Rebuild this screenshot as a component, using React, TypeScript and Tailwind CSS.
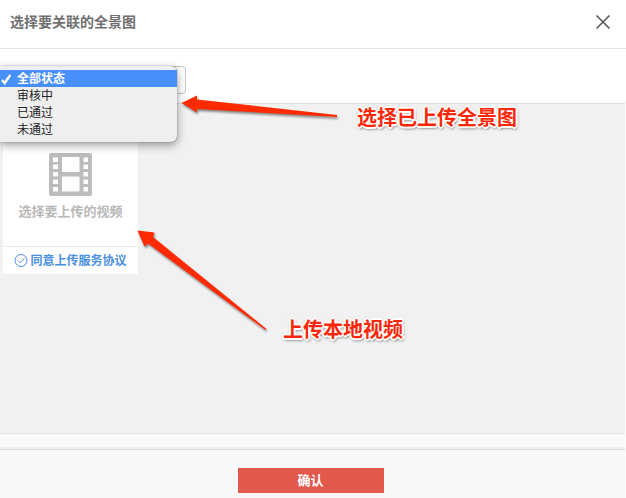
import { useState } from "react";

const statuses = [
    { id: "all", label: "全部状态" },
    { id: "pending", label: "审核中" },
    { id: "approved", label: "已通过" },
    { id: "rejected", label: "未通过" },
];

function CloseIcon() {
    return (
        <svg className="h-4 w-4" viewBox="0 0 16 16" fill="none" stroke="currentColor" strokeWidth={1.5}>
            <path d="M1.500 1.500l13 13M14.500 1.500l-13 13" />
        </svg>
    );
}

function TickIcon() {
    return (
        <svg className="h-3 w-3" viewBox="0 0 12 12" fill="none" stroke="currentColor" strokeWidth={2.4}>
            <path d="M1 7L3.700 10L9.300 2" />
        </svg>
    );
}

function FilmIcon() {
    return (
        <svg className="h-11 w-11" viewBox="0 0 44 44" fill="#bcbcbc">
            <path
                fillRule="evenodd"
                d="M2 1h39a2 2 0 012 2v39a2 2 0 01-2 2H2a2 2 0 01-2-2V3a2 2 0 012-2zM13 5h17.500v15H13zM13 24.500h17.500v15H13zM4 5.500h5v4.500H4zM4 12.500h5v4.500H4zM4 20h5v4.500H4zM4 27.500h5v4.500H4zM4 35h5v4.500H4zM34.500 5.500h4.500v4.500h-4.500zM34.500 12.500h4.500v4.500h-4.500zM34.500 20h4.500v4.500h-4.500zM34.500 27.500h4.500v4.500h-4.500zM34.500 35h4.500v4.500h-4.500z"
            />
        </svg>
    );
}

function AgreeIcon() {
    return (
        <svg className="h-3.5 w-3.5" viewBox="0 0 14 14" fill="none" stroke="currentColor" strokeWidth={1}>
            <circle cx="7" cy="6.5" r="6" />
            <path d="M4 6.500l2.300 2.300L10.300 4.500" />
        </svg>
    );
}

function StatusFilter() {
    const [status, setStatus] = useState("all");
    const [open, setOpen] = useState(true);

    return (
        <div className="relative h-7 w-[186px]">
            <select
                aria-label="状态"
                value={status}
                onChange={(e) => setStatus(e.target.value)}
                className="h-full w-full appearance-none rounded-sm border border-[#c8c8c8] bg-white px-4 text-xs"
            >
                {statuses.map((item) => (
                    <option key={item.id} value={item.id}>
                        {item.label}
                    </option>
                ))}
            </select>
            {open && (
                <ul className="absolute top-0 left-0 z-10 w-[177px] rounded-r-md bg-[#efefef] py-1 shadow-[0_0_1px_rgba(0,0,0,0.7),0_3px_10px_rgba(0,0,0,0.4)]">
                    {statuses.map((item) => (
                        <li key={item.id}>
                            <button
                                type="button"
                                onClick={() => {
                                    setStatus(item.id);
                                    setOpen(false);
                                }}
                                className={`flex h-[17px] w-full items-center gap-1 pl-px text-xs ${
                                    status === item.id ? "bg-[#4790fb] font-bold text-white" : "text-[#222]"
                                }`}
                            >
                                <span className="w-3">{status === item.id && <TickIcon />}</span>
                                {item.label}
                            </button>
                        </li>
                    ))}
                </ul>
            )}
        </div>
    );
}

function UploadCard() {
    return (
        <div className="ml-[3px] w-[135px] bg-white">
            <button type="button" className="flex h-[142px] w-full flex-col items-center pt-12 text-[#b8b8b8]">
                <FilmIcon />
                <span className="mt-1.5 text-[13px] leading-5 font-bold">选择要上传的视频</span>
            </button>
            <a
                href="#agreement"
                className="flex h-7 items-center justify-center gap-0.5 border-t border-[#ececec] text-xs font-bold text-[#4a8fe0]"
            >
                <AgreeIcon />
                同意上传服务协议
            </a>
        </div>
    );
}

const calloutText =
    "absolute text-xl leading-6 font-bold whitespace-nowrap text-[#fb2708] [text-shadow:-1px_-1px_0_#fff,1px_-1px_0_#fff,-1px_1px_0_#fff,1px_1px_0_#fff,-2px_0_0_#fff,2px_0_0_#fff,0_2px_0_#fff,0_-2px_0_#fff,0_0_3px_#777,1px_2px_3px_#444]";

const calloutArrow = "pointer-events-none absolute overflow-visible drop-shadow-[1px_2px_1px_rgba(0,0,0,0.45)]";

// Tutorial callouts drawn over the dialog
function Callouts() {
    return (
        <>
            <svg className={`${calloutArrow} top-[95px] left-[181px] z-20 h-5 w-40`} viewBox="0 0 160 20" fill="#ff2a00">
                <path d="M0.500 8L16 0.500V4.500L156 20V22L16 14V17.500z" />
            </svg>
            <p className={`${calloutText} top-[106px] left-[357px]`}>选择已上传全景图</p>
            <svg className={`${calloutArrow} top-[230px] left-[137px] h-25 w-33`} viewBox="0 0 132 100" fill="#ff2a00">
                <path d="M0.500 0.500L17.500 2.500L16 7L129.500 99L128.500 100L11 13.500L7.500 16.500z" />
            </svg>
            <p className={`${calloutText} top-[318px] left-[283px]`}>上传本地视频</p>
        </>
    );
}

export default function App() {
    return (
        <div className="relative flex min-h-screen flex-col bg-white font-['Liberation_Sans','Noto_Sans_CJK_SC',sans-serif]">
            <header className="flex h-[49px] items-center justify-between border-b border-[#e3e3e3] px-2.5 pb-1">
                <h1 className="text-[14px] leading-6 font-bold text-[#707070]">选择要关联的全景图</h1>
                <button type="button" aria-label="关闭" className="mr-[5px] text-[#555]">
                    <CloseIcon />
                </button>
            </header>

            <div className="h-[54px] pt-[17px]">
                <StatusFilter />
            </div>

            <main className="mr-px flex-1 border-t border-[#dcdcdc] bg-[#f1f1f1]">
                <UploadCard />
            </main>

            <div className="mr-px h-4 border-t border-b-2 border-t-[#e5e5e5] border-b-[#efeff0] bg-[#fafafa]" />

            <footer className="mr-px flex h-[49px] justify-center border-t border-[#dcdde0] bg-[#f7f8fa] pt-[18px] pr-1">
                <button type="button" className="h-[25px] w-[146px] bg-[#e2584d] text-[13px] font-bold text-white">
                    确认
                </button>
            </footer>

            <Callouts />
        </div>
    );
}
